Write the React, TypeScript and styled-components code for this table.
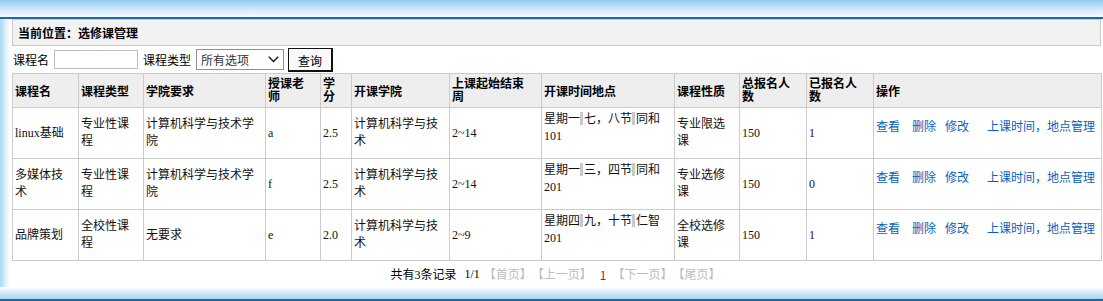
import React from "react";
import styled, { createGlobalStyle } from "styled-components";

const GlobalStyle = createGlobalStyle`
  html, body { margin: 0; padding: 0; background: #ffffff; }
  body {
    font-family: "Liberation Serif", "Noto Sans CJK SC", serif;
    font-size: 12px;
    color: #000;
  }
  * { box-sizing: border-box; }
`;

const cjk = `"Noto Sans CJK SC", "Liberation Sans", sans-serif`;

const Page = styled.div`
  width: 1103px;
  height: 301px;
  display: flex;
  flex-direction: column;
  overflow: hidden;
`;

const TopBar = styled.div`
  height: 17px;
  flex: none;
  background: linear-gradient(#8fcaee, #d4ebfa 60%, #f6fbfe);
`;

const TopRule = styled.div`
  height: 2px;
  flex: none;
  background: #1c69a7;
`;

const Middle = styled.div`
  flex: 1;
  display: flex;
  min-height: 0;
`;

const SideStrip = styled.div`
  width: 10px;
  flex: none;
  background: linear-gradient(to right, #acd7f2, #e9f5fc 70%, #ffffff);
`;

const Content = styled.main`
  flex: 1;
  min-width: 0;
  padding: 0 2px;
  display: flex;
  flex-direction: column;
`;

const BottomBar = styled.div`
  height: 12px;
  flex: none;
  background: linear-gradient(#ffffff, #d9eefb 40%, #a7d5f2);
`;

const BottomRule = styled.div`
  height: 2px;
  flex: none;
  background: #1d64a0;
`;

const Breadcrumb = styled.div`
  height: 27px;
  border: 1px solid #cbcbcb;
  background: #f2f2f2;
  padding-left: 5px;
  display: flex;
  align-items: center;
  font-family: ${cjk};
  font-weight: bold;
  font-size: 12px;
`;

const SearchBar = styled.form`
  height: 28px;
  display: flex;
  align-items: center;
  padding-left: 1px;
  font-family: ${cjk};
`;

const Label = styled.label`
  font-size: 12px;
  margin-right: 5px;
`;

const TextInput = styled.input`
  width: 84px;
  height: 19px;
  border: 1px solid #bdbdbd;
  padding: 0 2px;
  margin: 0 5px 0 0;
  font-size: 12px;
`;

const SelectWrap = styled.div`
  position: relative;
  width: 88px;
  height: 21px;
  margin-right: 4px;
`;

const Select = styled.select`
  appearance: none;
  width: 100%;
  height: 100%;
  border: 1px solid #8f8f8f;
  background: #fff;
  padding: 0 0 0 4px;
  font-family: ${cjk};
  font-size: 12px;
  color: #333;
  border-radius: 0;
`;

const Chevron = styled.svg`
  position: absolute;
  right: 5px;
  top: 7px;
  pointer-events: none;
`;

const Button = styled.button`
  width: 45px;
  height: 24px;
  border: 1px solid #111;
  border-right-width: 2px;
  border-bottom-width: 2px;
  background: #fafafa;
  font-family: ${cjk};
  font-size: 12px;
  padding: 3px 0 0;
  color: #000;
`;

const Table = styled.table`
  width: 1089px;
  border-collapse: collapse;
  table-layout: fixed;
`;

const Col = styled.col<{ $w: number }>`
  width: ${(p) => p.$w}px;
`;

const HeadCell = styled.th`
  height: 34px;
  background: #eeeeee;
  border: 1px solid #cccccc;
  padding: 0 2px;
  text-align: left;
  vertical-align: middle;
  font-family: ${cjk};
  font-weight: bold;
  font-size: 12px;
  line-height: 13px;
`;

const HeadLines = styled.span`
  display: block;
  padding-bottom: 4px;
`;

const Cell = styled.td`
  height: 51px;
  border: 1px solid #cccccc;
  padding: 0 2px;
  vertical-align: middle;
  line-height: 17px;
  font-size: 12px;
  color: #111;
`;

const Lines = styled.span<{ $lift?: number }>`
  display: block;
  padding-bottom: ${(p) => p.$lift ?? 0}px;
`;

const Gap = styled.span`
  display: inline-block;
  width: 3px;
  height: 13px;
  margin-right: 1px;
  background: #c9c9c9;
  vertical-align: -2px;
`;

const Actions = styled.span`
  display: block;
  white-space: nowrap;
  padding-bottom: 16px;
  font-family: ${cjk};
`;

const ActionLink = styled.a<{ $gap: number }>`
  color: #0862bd;
  text-decoration: none;
  margin-right: ${(p) => p.$gap}px;
  cursor: pointer;
`;

const Pager = styled.div`
  height: 26px;
  display: flex;
  justify-content: center;
  align-items: center;
  font-size: 12px;
  padding-right: 2px;
`;

const Total = styled.span`
  margin-right: 8px;
`;

const PageNum = styled.span`
  margin-right: 4px;
`;

const PageLink = styled.span`
  color: #bdbdbd;
`;

const Current = styled.span`
  color: #ff0000;
  font-family: ${cjk};
  margin: 0 6px 0 8px;
`;

const widths = [66, 65, 122, 55, 31, 98, 92, 133, 65, 67, 67, 228];

const headers: React.ReactNode[] = [
  "课程名",
  "课程类型",
  "学院要求",
  <HeadLines key="t">授课老<br />师</HeadLines>,
  <HeadLines key="c">学<br />分</HeadLines>,
  "开课学院",
  <HeadLines key="w">上课起始结束<br />周</HeadLines>,
  "开课时间地点",
  "课程性质",
  <HeadLines key="a">总报名人<br />数</HeadLines>,
  <HeadLines key="b">已报名人<br />数</HeadLines>,
  "操作",
];

type Course = {
  name: string[];
  type: string[];
  req: string[];
  teacher: string;
  credit: string;
  college: string[];
  weeks: string;
  time: string[];
  room: string;
  nature: string[];
  total: string;
  enrolled: string;
};

const courses: Course[] = [
  {
    name: ["linux基础"],
    type: ["专业性课", "程"],
    req: ["计算机科学与技术学", "院"],
    teacher: "a",
    credit: "2.5",
    college: ["计算机科学与技", "术"],
    weeks: "2~14",
    time: ["星期一", "七，八节", "同和"],
    room: "101",
    nature: ["专业限选", "课"],
    total: "150",
    enrolled: "1",
  },
  {
    name: ["多媒体技", "术"],
    type: ["专业性课", "程"],
    req: ["计算机科学与技术学", "院"],
    teacher: "f",
    credit: "2.5",
    college: ["计算机科学与技", "术"],
    weeks: "2~14",
    time: ["星期一", "三，四节", "同和"],
    room: "201",
    nature: ["专业选修", "课"],
    total: "150",
    enrolled: "0",
  },
  {
    name: ["品牌策划"],
    type: ["全校性课", "程"],
    req: ["无要求"],
    teacher: "e",
    credit: "2.0",
    college: ["计算机科学与技", "术"],
    weeks: "2~9",
    time: ["星期四", "九，十节", "仁智"],
    room: "201",
    nature: ["全校选修", "课"],
    total: "150",
    enrolled: "1",
  },
];

const actions = [
  { label: "查看", gap: 12 },
  { label: "删除", gap: 9 },
  { label: "修改", gap: 18 },
  { label: "上课时间，地点管理", gap: 0 },
];

function MultiLine({ lines }: { lines: string[] }) {
  return (
    <Lines>
      {lines.map((l, i) => (
        <React.Fragment key={i}>
          {i > 0 && <br />}
          {l}
        </React.Fragment>
      ))}
    </Lines>
  );
}

export default function App() {
  return (
    <>
      <GlobalStyle />
      <Page>
        <TopBar />
        <TopRule />
        <Middle>
          <SideStrip />
          <Content>
            <Breadcrumb>当前位置：选修课管理</Breadcrumb>
            <SearchBar onSubmit={(e) => e.preventDefault()}>
              <Label>课程名</Label>
              <TextInput type="text" />
              <Label>课程类型</Label>
              <SelectWrap>
                <Select defaultValue="all">
                  <option value="all">所有选项</option>
                </Select>
                <Chevron width="11" height="7" viewBox="0 0 11 7">
                  <polyline points="0.8,0.8 5.5,5.5 10.2,0.8" fill="none" stroke="#1a1a1a" strokeWidth="1.4" />
                </Chevron>
              </SelectWrap>
              <Button type="submit">查询</Button>
            </SearchBar>
            <Table>
              <colgroup>
                {widths.map((w, i) => (
                  <Col key={i} $w={w} />
                ))}
              </colgroup>
              <thead>
                <tr>
                  {headers.map((h, i) => (
                    <HeadCell key={i}>{h}</HeadCell>
                  ))}
                </tr>
              </thead>
              <tbody>
                {courses.map((c, i) => (
                  <tr key={i}>
                    <Cell><MultiLine lines={c.name} /></Cell>
                    <Cell><MultiLine lines={c.type} /></Cell>
                    <Cell><MultiLine lines={c.req} /></Cell>
                    <Cell>{c.teacher}</Cell>
                    <Cell>{c.credit}</Cell>
                    <Cell><MultiLine lines={c.college} /></Cell>
                    <Cell>{c.weeks}</Cell>
                    <Cell>
                      <Lines $lift={10}>
                        {c.time[0]}
                        <Gap />
                        {c.time[1]}
                        <Gap />
                        {c.time[2]}
                        <br />
                        {c.room}
                      </Lines>
                    </Cell>
                    <Cell><MultiLine lines={c.nature} /></Cell>
                    <Cell>{c.total}</Cell>
                    <Cell>{c.enrolled}</Cell>
                    <Cell>
                      <Actions>
                        {actions.map((a) => (
                          <ActionLink key={a.label} $gap={a.gap}>
                            {a.label}
                          </ActionLink>
                        ))}
                      </Actions>
                    </Cell>
                  </tr>
                ))}
              </tbody>
            </Table>
            <Pager>
              <Total>共有3条记录</Total>
              <PageNum>1/1</PageNum>
              <PageLink>【首页】</PageLink>
              <PageLink>【上一页】</PageLink>
              <Current>1</Current>
              <PageLink>【下一页】</PageLink>
              <PageLink>【尾页】</PageLink>
            </Pager>
          </Content>
        </Middle>
        <BottomBar />
        <BottomRule />
      </Page>
    </>
  );
}
